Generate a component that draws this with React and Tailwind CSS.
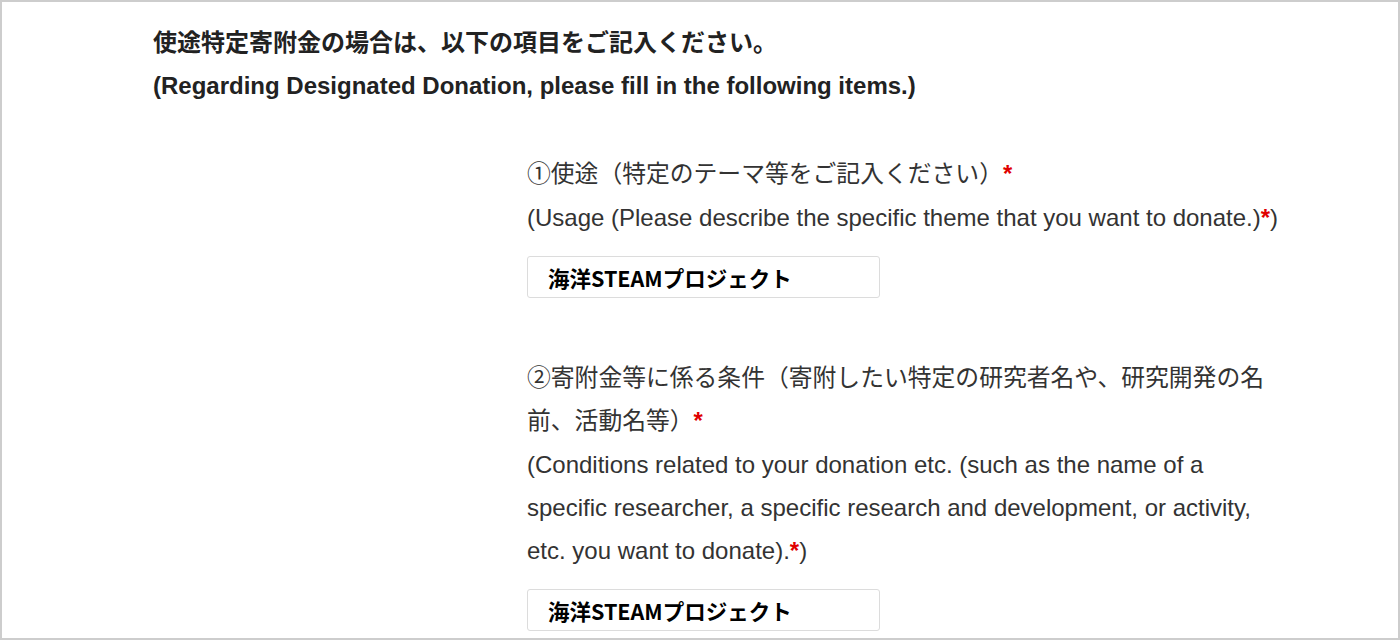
export default function App() {
  const req = <span className="text-[#e00000] font-bold">*</span>;

  return (
    <div className="w-[1400px] h-[640px] bg-white border-2 border-[#cdcdcd] overflow-hidden font-['Liberation_Sans','Noto_Sans_CJK_JP',sans-serif]">
      <div className="pl-[151px] pt-[19px]">
        <div className="text-[24px] leading-[43px] font-bold text-[#222]">
          <p>使途特定寄附金の場合は、以下の項目をご記入ください。</p>
          <p>(Regarding Designated Donation, please fill in the following items.)</p>
        </div>

        <div className="ml-[374px] text-[23.8px] leading-[43px] text-[#333]">
          <div className="mt-[45px]">
            <p className="whitespace-nowrap">①使途（特定のテーマ等をご記入ください）{req}</p>
            <p className="mt-px whitespace-nowrap text-[24px]">
              (Usage (Please describe the specific theme that you want to donate.){req})
            </p>
            <div className="mt-[17px] w-[353px] h-[42px] border border-[#dcdcdc] rounded-[3px] flex items-center pl-5 font-['Noto_Sans_CJK_JP',sans-serif] font-bold text-[21.5px] text-black">
              海洋STEAMプロジェクト
            </div>
          </div>

          <div className="mt-[58px]">
            <p className="whitespace-nowrap">
              ②寄附金等に係る条件（寄附したい特定の研究者名や、研究開発の名
              <br />
              前、活動名等）{req}
            </p>
            <p className="mt-px whitespace-nowrap text-[24px]">
              (Conditions related to your donation etc. (such as the name of a
              <br />
              specific researcher, a specific research and development, or activity,
              <br />
              etc. you want to donate).{req})
            </p>
            <div className="mt-[17px] w-[353px] h-[42px] border border-[#dcdcdc] rounded-[3px] flex items-center pl-5 font-['Noto_Sans_CJK_JP',sans-serif] font-bold text-[21.5px] text-black">
              海洋STEAMプロジェクト
            </div>
          </div>
        </div>
      </div>
    </div>
  );
}
